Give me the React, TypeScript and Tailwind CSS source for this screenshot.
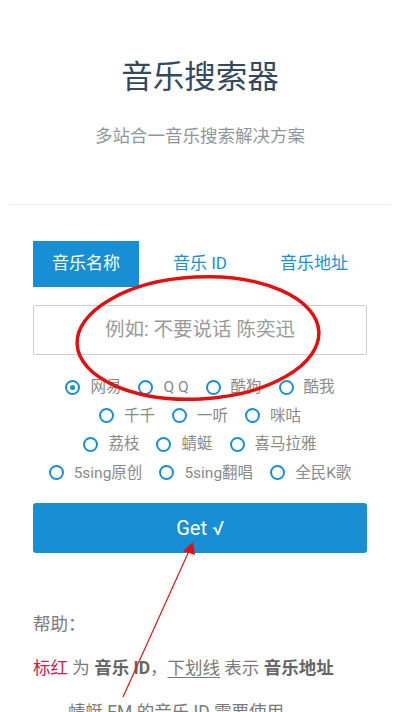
import React from "react";

const BLUE = "bg-[#188fd5]";

function Radio({ label, checked }: { label: string; checked?: boolean }) {
  return (
    <label className="flex items-center gap-[10px]">
      <span className="w-[15px] h-[15px] rounded-full border-2 border-[#188fd5] flex items-center justify-center">
        {checked && <span className="w-[5px] h-[5px] rounded-full bg-[#188fd5]" />}
      </span>
      <span className="text-[15.5px] text-[#8a8a8a] leading-[20px]">{label}</span>
    </label>
  );
}

const rows: string[][] = [
  ["网易", "Q Q", "酷狗", "酷我"],
  ["千千", "一听", "咪咕"],
  ["荔枝", "蜻蜓", "喜马拉雅"],
  ["5sing原创", "5sing翻唱", "全民K歌"],
];

export default function App() {
  return (
    <div
      className="relative w-[400px] h-[712px] overflow-hidden bg-white"
      style={{ fontFamily: "Roboto, 'Noto Sans CJK SC', sans-serif" }}
    >
      <div className="px-[10px]">
        <h1 className="mt-[60px] h-[36px] leading-[36px] text-[31.5px] text-center text-[#34495e] font-normal">
          音乐搜索器
        </h1>
        <p className="mt-[28px] leading-[24px] text-[17.5px] text-center text-[#8f979b]">
          多站合一音乐搜索解决方案
        </p>
        <div className="mt-[56px] h-px bg-[#eeeeee]" />
      </div>
      <div className="px-[33px]">
        <div className="mt-[36px] flex justify-between w-[334px]">
          <div className={`h-[46px] px-[19px] flex items-center text-white text-[17px] ${BLUE}`}>音乐名称</div>
          <div className="h-[46px] px-[19px] flex items-center text-[#188fd5] text-[17px]">音乐 ID</div>
          <div className="h-[46px] px-[19px] flex items-center text-[#188fd5] text-[17px]">音乐地址</div>
        </div>
        <div className="mt-[18px] h-[50px] w-[334px] border border-[#cccccc] rounded-[2px] flex items-center justify-center">
          <span className="text-[19.5px] text-[#9a9a9a]">例如: 不要说话 陈奕迅</span>
        </div>
        <div className="mt-[18px] w-[334px] flex flex-col">
          {rows.map((r, i) => (
            <div key={i} className="h-[28.5px] flex items-center justify-center gap-[17px]">
              {r.map((l, j) => (
                <Radio key={l} label={l} checked={i === 0 && j === 0} />
              ))}
            </div>
          ))}
        </div>
        <button
          className={`mt-[16px] h-[50px] w-[334px] rounded-[3px] ${BLUE} text-white text-[20px] flex items-center justify-center`}
        >
          Get √
        </button>
        <p className="mt-[59px] leading-[24px] text-[17.5px] text-[#7a7a7a]">帮助：</p>
        <p className="mt-[20px] leading-[24px] text-[17.5px] text-[#7a7a7a] whitespace-nowrap">
          <span className="text-[#c7254e]">标红</span> 为 <b className="text-[#666666]">音乐 ID</b>，
          <span className="underline underline-offset-[3px]">下划线</span> 表示{" "}
          <b className="text-[#666666]">音乐地址</b>
        </p>
        <p className="mt-[20px] pl-[35px] leading-[24px] text-[17.5px] text-[#7a7a7a] whitespace-nowrap">
          蜻蜓 FM 的音乐 ID 需要使用
        </p>
      </div>

      <svg className="absolute inset-0 pointer-events-none" width="400" height="712" viewBox="0 0 400 712">
        <ellipse
          cx="198"
          cy="338"
          rx="121"
          ry="61"
          fill="none"
          stroke="#e31010"
          strokeWidth="3.5"
          transform="rotate(-3 198 338)"
        />
        <line x1="123" y1="697" x2="189" y2="551" stroke="#e31010" strokeWidth="1.2" />
        <polygon points="193,542 195,555 183,551" fill="#e31010" />
      </svg>
    </div>
  );
}
